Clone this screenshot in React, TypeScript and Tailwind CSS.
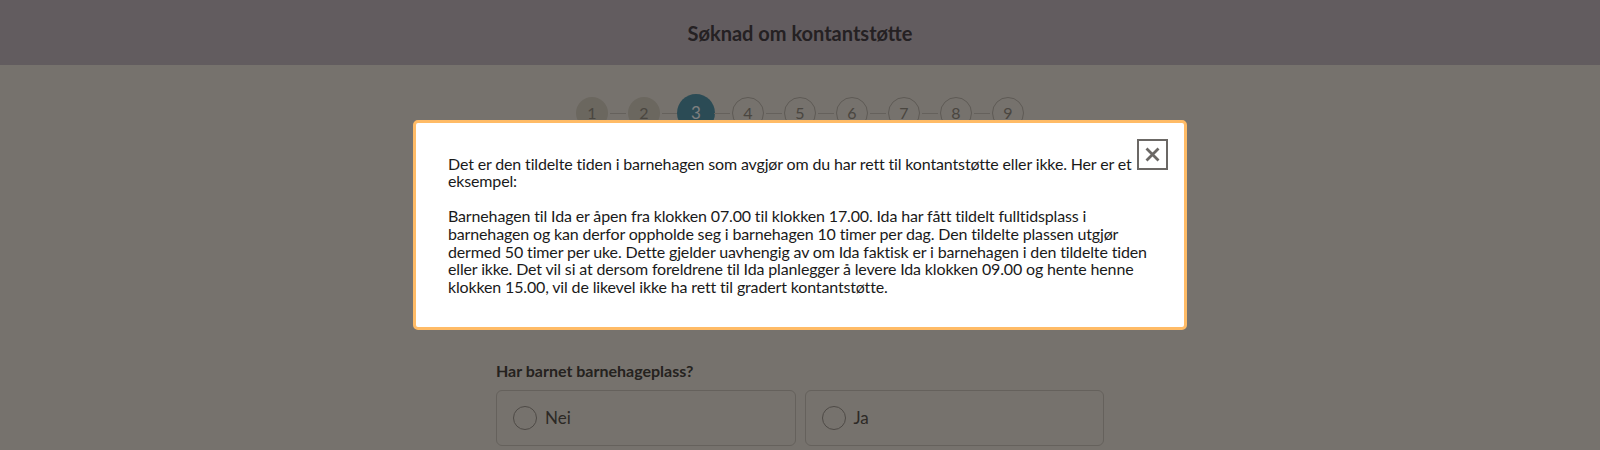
import { useState } from "react";

// Stegene i søknaden
const steps = [1, 2, 3, 4, 5, 6, 7, 8, 9];
const activeStep = 3;

function StepIndicator() {
  return (
    <div className="flex items-center justify-center">
      {steps.map((step, index) => (
        <div key={step} className="flex items-center">
          {index > 0 && <div className="mx-[2px] h-px w-4 bg-[#cac2b8]" />}
          {step === activeStep ? (
            <div className="-mx-[3px] flex h-[38px] w-[38px] items-center justify-center rounded-full bg-[#5696aa] text-[17px] text-white">
              {step}
            </div>
          ) : step < activeStep ? (
            <div className="flex h-8 w-8 items-center justify-center rounded-full bg-[#d6cebe] text-[16px] text-[#948c80]">
              {step}
            </div>
          ) : (
            <div className="flex h-8 w-8 items-center justify-center rounded-full border border-[#bcb4aa] text-[16px] text-[#948c80]">
              {step}
            </div>
          )}
        </div>
      ))}
    </div>
  );
}

function RadioOption({ label }: { label: string }) {
  return (
    <label className="flex items-center gap-2 rounded-md border border-[#cac2b8] px-4 py-[15px]">
      <span className="h-6 w-6 rounded-full border border-[#9c948c]" />
      <span className="text-[17px] leading-6 text-[#5a534c]">{label}</span>
    </label>
  );
}

export default function App() {
  const [open, setOpen] = useState(true);

  return (
    <div className="min-h-[450px] overflow-hidden bg-[#ece4da] font-['Lato',sans-serif] text-[#3e3832]">
      {/* Topp */}
      <header className="flex h-[65px] items-center justify-center bg-[#c4b8be]">
        <h1 className="text-[20px] font-bold text-[#4a4246]">Søknad om kontantstøtte</h1>
      </header>

      <main className="pt-[29px]">
        <StepIndicator />

        <div className="mx-auto mt-[229px] w-[608px]">
          <p className="text-[16px] leading-5 font-bold text-[#4a443e]">Har barnet barnehageplass?</p>
          <div className="mt-[9px] grid grid-cols-2 gap-[9px]">
            <RadioOption label="Nei" />
            <RadioOption label="Ja" />
          </div>
        </div>
      </main>

      {open && (
        <div className="fixed inset-0 flex items-center justify-center bg-black/50">
          <div className="relative w-[774px] rounded-[5px] border-[3px] border-[#ffbb66] bg-white px-8 py-8 text-[16px] leading-[17.6px] tracking-[-0.15px] text-[#1a1a1a]">
            <button
              type="button"
              onClick={() => setOpen(false)}
              className="absolute right-[16px] top-[16px] flex h-[31px] w-[31px] items-center justify-center border-2 border-[#6b6865] bg-white"
              aria-label="Lukk"
            >
              <svg width="15" height="15" viewBox="0 0 15 15" fill="none" stroke="#6b6865" strokeWidth="2.8">
                <path d="M1.5 1.5L13.5 13.5M13.5 1.5L1.5 13.5" />
              </svg>
            </button>
            <div className="w-[704px]">
              <p>
                Det er den tildelte tiden i barnehagen som avgjør om du har rett til kontantstøtte eller ikke. Her er et
                eksempel:
              </p>
              <p className="mt-[17.6px]">
                Barnehagen til Ida er åpen fra klokken 07.00 til klokken 17.00. Ida har fått tildelt fulltidsplass i
                barnehagen og kan derfor oppholde seg i barnehagen 10 timer per dag. Den tildelte plassen utgjør
                dermed 50 timer per uke. Dette gjelder uavhengig av om Ida faktisk er i barnehagen i den tildelte tiden
                eller ikke. Det vil si at dersom foreldrene til Ida planlegger å levere Ida klokken 09.00 og hente henne
                klokken 15.00, vil de likevel ikke ha rett til gradert kontantstøtte.
              </p>
            </div>
          </div>
        </div>
      )}
    </div>
  );
}
